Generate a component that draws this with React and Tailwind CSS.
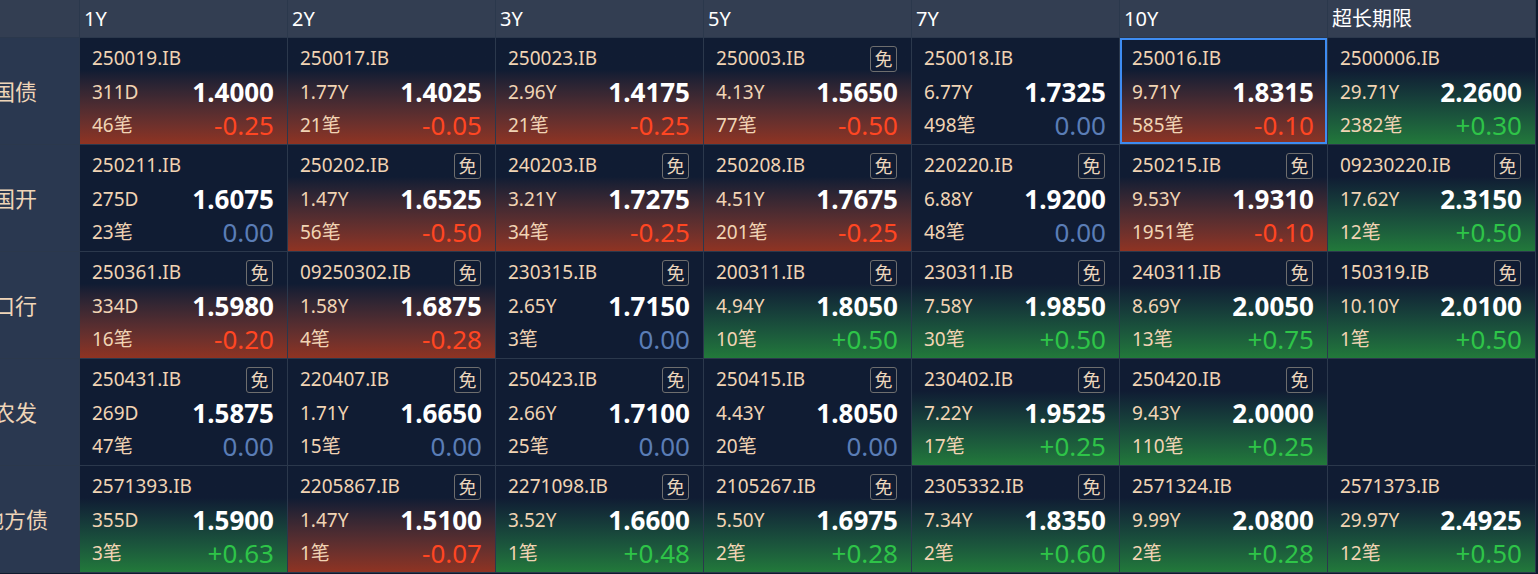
import React from 'react';

const cols = ['1Y', '2Y', '3Y', '5Y', '7Y', '10Y', '超长期限'];

// [code, free, term, yield, count, change, selected]
const rows = [
  {
    label: '国债',
    cells: [
      ['250019.IB', false, '311D', '1.4000', '46笔', '-0.25'],
      ['250017.IB', false, '1.77Y', '1.4025', '21笔', '-0.05'],
      ['250023.IB', false, '2.96Y', '1.4175', '21笔', '-0.25'],
      ['250003.IB', true, '4.13Y', '1.5650', '77笔', '-0.50'],
      ['250018.IB', false, '6.77Y', '1.7325', '498笔', '0.00'],
      ['250016.IB', false, '9.71Y', '1.8315', '585笔', '-0.10', true],
      ['2500006.IB', false, '29.71Y', '2.2600', '2382笔', '+0.30'],
    ],
  },
  {
    label: '国开',
    cells: [
      ['250211.IB', false, '275D', '1.6075', '23笔', '0.00'],
      ['250202.IB', true, '1.47Y', '1.6525', '56笔', '-0.50'],
      ['240203.IB', true, '3.21Y', '1.7275', '34笔', '-0.25'],
      ['250208.IB', true, '4.51Y', '1.7675', '201笔', '-0.25'],
      ['220220.IB', true, '6.88Y', '1.9200', '48笔', '0.00'],
      ['250215.IB', true, '9.53Y', '1.9310', '1951笔', '-0.10'],
      ['09230220.IB', true, '17.62Y', '2.3150', '12笔', '+0.50'],
    ],
  },
  {
    label: '口行',
    cells: [
      ['250361.IB', true, '334D', '1.5980', '16笔', '-0.20'],
      ['09250302.IB', true, '1.58Y', '1.6875', '4笔', '-0.28'],
      ['230315.IB', true, '2.65Y', '1.7150', '3笔', '0.00'],
      ['200311.IB', true, '4.94Y', '1.8050', '10笔', '+0.50'],
      ['230311.IB', true, '7.58Y', '1.9850', '30笔', '+0.50'],
      ['240311.IB', true, '8.69Y', '2.0050', '13笔', '+0.75'],
      ['150319.IB', true, '10.10Y', '2.0100', '1笔', '+0.50'],
    ],
  },
  {
    label: '农发',
    cells: [
      ['250431.IB', true, '269D', '1.5875', '47笔', '0.00'],
      ['220407.IB', true, '1.71Y', '1.6650', '15笔', '0.00'],
      ['250423.IB', true, '2.66Y', '1.7100', '25笔', '0.00'],
      ['250415.IB', true, '4.43Y', '1.8050', '20笔', '0.00'],
      ['230402.IB', true, '7.22Y', '1.9525', '17笔', '+0.25'],
      ['250420.IB', true, '9.43Y', '2.0000', '110笔', '+0.25'],
      null,
    ],
  },
  {
    label: '地方债',
    cells: [
      ['2571393.IB', false, '355D', '1.5900', '3笔', '+0.63'],
      ['2205867.IB', true, '1.47Y', '1.5100', '1笔', '-0.07'],
      ['2271098.IB', true, '3.52Y', '1.6600', '1笔', '+0.48'],
      ['2105267.IB', true, '5.50Y', '1.6975', '2笔', '+0.28'],
      ['2305332.IB', true, '7.34Y', '1.8350', '2笔', '+0.60'],
      ['2571324.IB', false, '9.99Y', '2.0800', '2笔', '+0.28'],
      ['2571373.IB', false, '29.97Y', '2.4925', '12笔', '+0.50'],
    ],
  },
];

const Cell = ({ d }) => {
  if (!d) return <div className="bg-[#101c33]" />;
  const [code, free, term, yld, count, chg, selected] = d;
  const down = chg.startsWith('-');
  const up = chg.startsWith('+');

  let bg = 'bg-[#101c33]';
  if (down) bg = 'bg-linear-to-b from-[#101c33] from-30% to-[#8f3322]';
  if (up) bg = 'bg-linear-to-b from-[#101c33] from-30% to-[#22793a]';

  const chgColor = down ? 'text-[#ff4622]' : up ? 'text-[#2ec448]' : 'text-[#5a7db6]';

  return (
    <div className={`${bg} flex flex-col pl-3 pr-[13px] pt-[4px] ${selected ? 'ring-2 ring-inset ring-[#3e8cf2]' : ''}`}>
      <div className="h-[33px] flex items-center justify-between">
        <span className="text-[19px] text-[#f1d4b4]">{code}</span>
        {free && (
          <span className="w-[27px] h-[26px] mr-[1px] flex items-center justify-center border border-[#6e6e6e] rounded-[3px] text-[18px] text-[#ecd6bc] leading-none">
            免
          </span>
        )}
      </div>
      <div className="h-[34px] flex items-center justify-between">
        <span className="text-[19px] text-[#f1d4b4]">{term}</span>
        <span className="text-[26px] font-bold text-white">{yld}</span>
      </div>
      <div className="h-[33px] flex items-center justify-between">
        <span className="text-[19px] text-[#f1d4b4]">{count}</span>
        <span className={`text-[26px] ${chgColor}`}>{chg}</span>
      </div>
    </div>
  );
};

export default function App() {
  return (
    <div className="w-[1538px] h-[574px] overflow-hidden bg-[#101a2e] font-['Noto_Sans','Noto_Sans_CJK_SC',sans-serif]">
      <div className="grid grid-cols-[79px_repeat(7,207px)] grid-rows-[37px_repeat(5,106px)] gap-px bg-[#2b384c] w-max border-b border-r border-[#2b384c]">
        <div className="bg-[#333e52]" />
        {cols.map((c) => (
          <div key={c} className="bg-[#333e52] flex items-center pl-1 text-[20px] text-white leading-none">
            {c}
          </div>
        ))}
        {rows.map((r) => (
          <React.Fragment key={r.label}>
            <div className="bg-[#2a3850] flex items-center overflow-hidden">
              <div className="w-[30px] shrink-0 flex justify-center">
                <span className="whitespace-nowrap text-[22px] text-[#efd5b8]">{r.label}</span>
              </div>
            </div>
            {r.cells.map((d, i) => (
              <Cell key={i} d={d} />
            ))}
          </React.Fragment>
        ))}
      </div>
    </div>
  );
}
